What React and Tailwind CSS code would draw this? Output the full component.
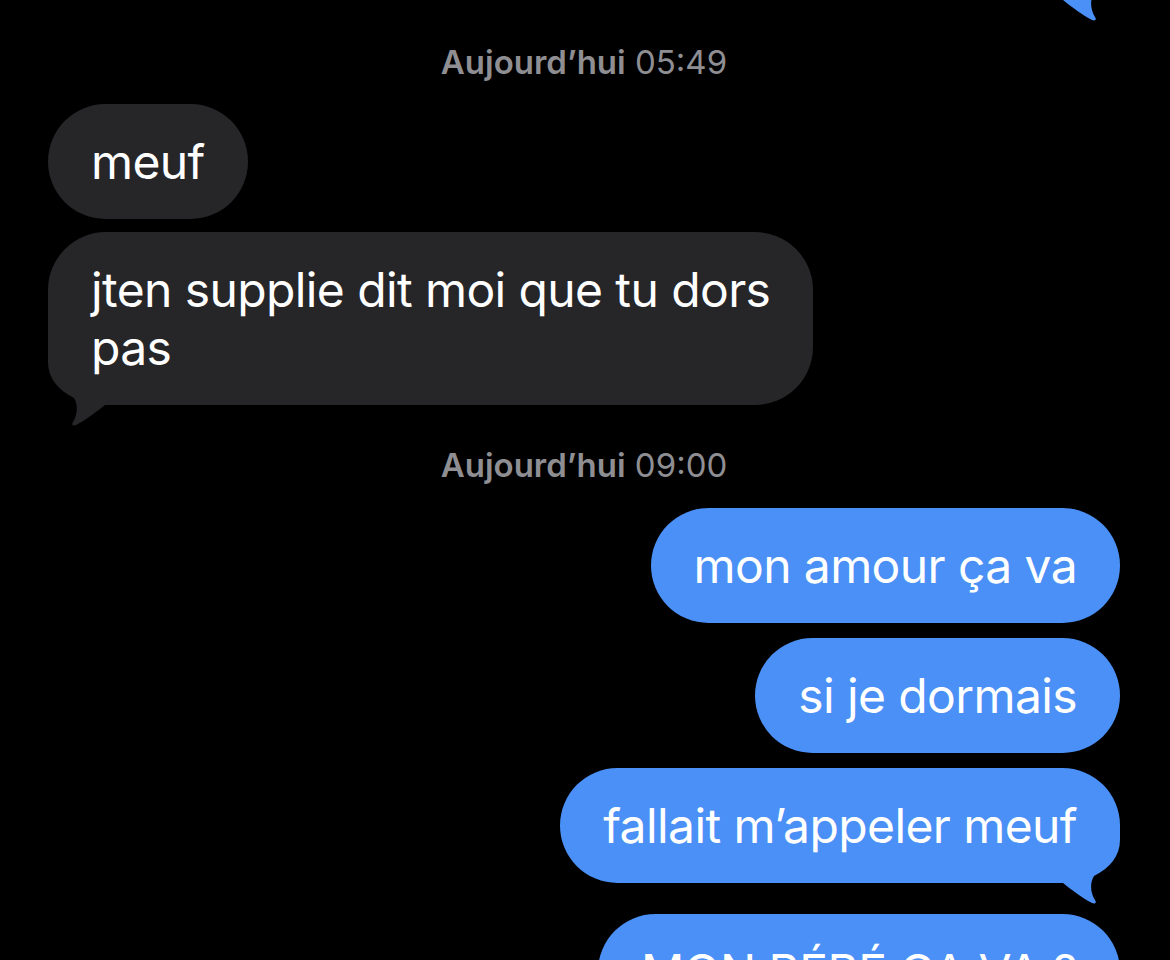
import React from "react";

const BLUE = "#4A90F6";
const GRAY = "#262629";

function Tail({ side, color }) {
  const isRight = side === "right";
  return (
    <svg
      width="60"
      height="80"
      viewBox="0 0 60 80"
      className={
        "absolute bottom-[-23px] " + (isRight ? "right-0" : "left-0 -scale-x-100")
      }
    >
      <path
        d="M60 0 L60 14 C60 30 50 42 34 50 C30 56 30 66 35 74 C37 77 35 78 32 77 C22 72 12 64 3 57 L0 57 L0 0 Z"
        fill={color}
      />
    </svg>
  );
}

function Bubble({ children, side, tail, className = "" }) {
  const isRight = side === "right";
  return (
    <div className={"flex " + (isRight ? "justify-end" : "justify-start") + " " + className}>
      <div
        className={
          "relative rounded-[58px] px-[43px] pt-[29px] pb-[28px] text-[48px] leading-[58px] text-white tracking-[-0.6px] " +
          (isRight ? "bg-[#4A90F6]" : "bg-[#262629]")
        }
      >
        {tail && <Tail side={side} color={isRight ? BLUE : GRAY} />}
        <span className="relative">{children}</span>
      </div>
    </div>
  );
}

function Stamp({ day, time, className = "" }) {
  return (
    <div className={"text-center text-[33px] leading-[40px] text-[#8E8E93] " + className}>
      <span className="font-semibold">{day}</span> <span>{time}</span>
    </div>
  );
}

export default function App() {
  return (
    <div className="w-[1170px] h-[960px] bg-black overflow-hidden font-['Inter',sans-serif]">
      <div className="flex flex-col pl-[48px] pr-[50px]">
        <div className="flex justify-end mt-[-115px]">
          <div className="relative w-[420px] h-[115px] rounded-[58px] bg-[#4A90F6]">
            <Tail side="right" color={BLUE} />
          </div>
        </div>
        <Stamp day="Aujourd’hui" time="05:49" className="mt-[42px]" />
        <Bubble side="left" className="mt-[22px]">
          meuf
        </Bubble>
        <Bubble side="left" tail className="mt-[13px]">
          jten supplie dit moi que tu dors
          <br />
          pas
        </Bubble>
        <Stamp day="Aujourd’hui" time="09:00" className="mt-[40px]" />
        <Bubble side="right" className="mt-[23px]">
          mon amour ça va
        </Bubble>
        <Bubble side="right" className="mt-[15px]">
          si je dormais
        </Bubble>
        <Bubble side="right" tail className="mt-[15px]">
          fallait m’appeler meuf
        </Bubble>
        <Bubble side="right" className="mt-[31px]">
          MON BÉBÉ ÇA VA ?
        </Bubble>
      </div>
    </div>
  );
}
